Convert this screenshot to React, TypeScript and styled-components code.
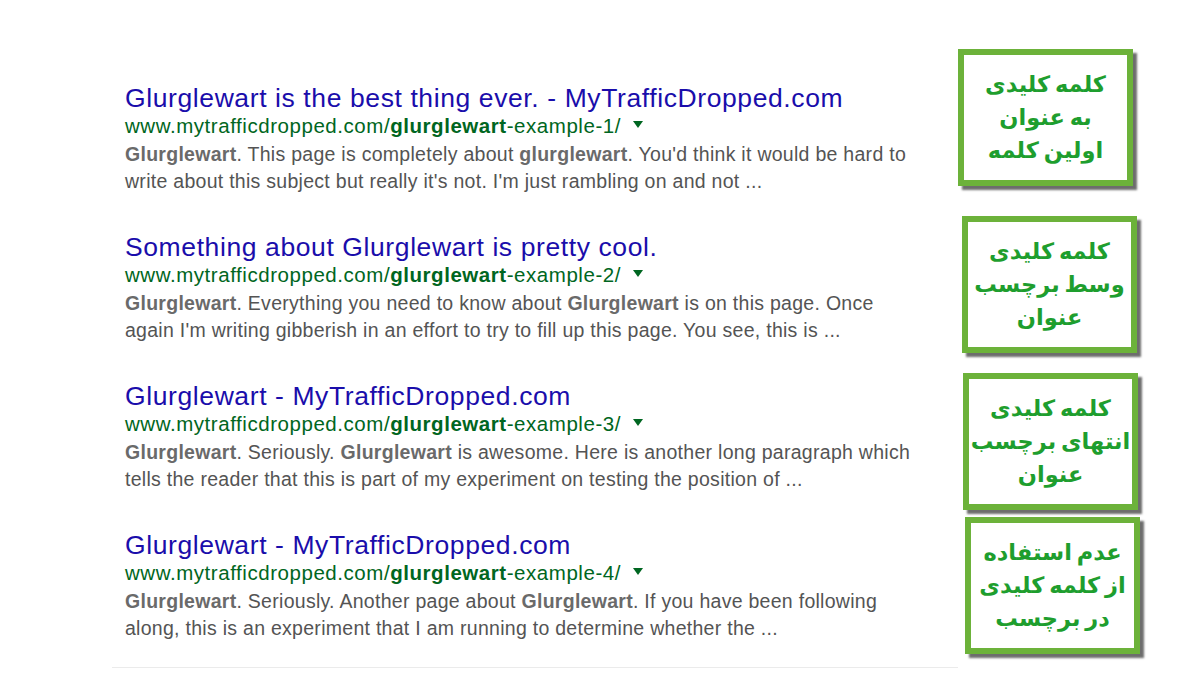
import { createGlobalStyle } from 'styled-components'
import styled from 'styled-components'

const GlobalStyle = createGlobalStyle`
	html, body {
		margin: 0;
		padding: 0;
		background: #ffffff;
	}
`

interface SearchResult {
	title: string
	slug: string
	snippet: (string | { bold: string })[][]
}

const results: SearchResult[] = [
	{
		title: 'Glurglewart is the best thing ever. - MyTrafficDropped.com',
		slug: 'example-1/',
		snippet: [
			[
				{ bold: 'Glurglewart' },
				'. This page is completely about ',
				{ bold: 'glurglewart' },
				". You'd think it would be hard to",
			],
			["write about this subject but really it's not. I'm just rambling on and not ..."],
		],
	},
	{
		title: 'Something about Glurglewart is pretty cool.',
		slug: 'example-2/',
		snippet: [
			[
				{ bold: 'Glurglewart' },
				'. Everything you need to know about ',
				{ bold: 'Glurglewart' },
				' is on this page. Once',
			],
			["again I'm writing gibberish in an effort to try to fill up this page. You see, this is ..."],
		],
	},
	{
		title: 'Glurglewart - MyTrafficDropped.com',
		slug: 'example-3/',
		snippet: [
			[
				{ bold: 'Glurglewart' },
				'. Seriously. ',
				{ bold: 'Glurglewart' },
				' is awesome. Here is another long paragraph which',
			],
			['tells the reader that this is part of my experiment on testing the position of ...'],
		],
	},
	{
		title: 'Glurglewart - MyTrafficDropped.com',
		slug: 'example-4/',
		snippet: [
			[
				{ bold: 'Glurglewart' },
				'. Seriously. Another page about ',
				{ bold: 'Glurglewart' },
				'. If you have been following',
			],
			['along, this is an experiment that I am running to determine whether the ...'],
		],
	},
]

const notes = [
	{ lines: ['کلمه کلیدی', 'به عنوان', 'اولین کلمه'], top: 49, left: 0 },
	{ lines: ['کلمه کلیدی', 'وسط برچسب', 'عنوان'], top: 30, left: 4 },
	{ lines: ['کلمه کلیدی', 'انتهای برچسب', 'عنوان'], top: 20, left: 5 },
	{ lines: ['عدم استفاده', 'از کلمه کلیدی', 'در برچسب'], top: 7, left: 7 },
]

export default function App() {
	return (
		<Page>
			<GlobalStyle />
			<Results>
				{results.map((r) => (
					<Result key={r.slug}>
						<Title href="#">{r.title}</Title>
						<Url>
							www.mytrafficdropped.com/<b>glurglewart</b>-{r.slug}
							<Caret />
						</Url>
						{r.snippet.map((line, i) => (
							<Snippet key={i}>
								{line.map((part, j) =>
									typeof part === 'string' ? part : <b key={j}>{part.bold}</b>,
								)}
							</Snippet>
						))}
					</Result>
				))}
			</Results>
			<Notes>
				{notes.map((n, i) => (
					<Note key={i} $top={n.top} $left={n.left}>
						{n.lines.map((l) => (
							<NoteLine key={l}>{l}</NoteLine>
						))}
					</Note>
				))}
			</Notes>
		</Page>
	)
}

const Page = styled.div`
	display: flex;
	align-items: flex-start;
	width: 1203px;
	height: 685px;
	padding-left: 112px;
	box-sizing: border-box;
	font-family: 'Liberation Sans', Arial, sans-serif;
`

const Results = styled.div`
	width: 846px;
	padding: 83px 0 25px 13px;
	box-sizing: border-box;
	border-bottom: 1px solid #ebebeb;
`

const Result = styled.div`
	margin-bottom: 37px;

	&:last-child {
		margin-bottom: 0;
	}
`

const Title = styled.a`
	display: block;
	font-size: 26.5px;
	letter-spacing: 0.6px;
	line-height: 30px;
	color: #1a0dab;
	text-decoration: none;
	white-space: nowrap;
`

const Url = styled.div`
	font-size: 20.5px;
	letter-spacing: 0.55px;
	line-height: 26px;
	margin-bottom: 2px;
	color: #006621;
	white-space: nowrap;

	b {
		font-weight: bold;
	}
`

const Caret = styled.span`
	display: inline-block;
	margin-left: 12px;
	vertical-align: middle;
	border-left: 5px solid transparent;
	border-right: 5px solid transparent;
	border-top: 7px solid #006621;
	position: relative;
	top: -3px;
`

const Snippet = styled.div`
	font-size: 19.5px;
	letter-spacing: 0.28px;
	line-height: 27px;
	color: #545454;
	white-space: nowrap;

	b {
		color: #6a6a6a;
	}
`

const Notes = styled.div`
	display: flex;
	flex-direction: column;
`

const Note = styled.div<{ $top: number; $left: number }>`
	display: flex;
	flex-direction: column;
	align-items: center;
	justify-content: center;
	width: 175px;
	height: 137px;
	margin-top: ${(p) => p.$top}px;
	margin-left: ${(p) => p.$left}px;
	box-sizing: border-box;
	border: 6px solid #6cb23a;
	background: #ffffff;
	box-shadow: 4px 4px 2px rgba(60, 60, 60, 0.75);
	direction: rtl;
`

const NoteLine = styled.div`
	font-family: 'DejaVu Sans', sans-serif;
	font-weight: bold;
	font-size: 22.5px;
	word-spacing: -3px;
	line-height: 33px;
	color: #1e9e2e;
	white-space: nowrap;
`
